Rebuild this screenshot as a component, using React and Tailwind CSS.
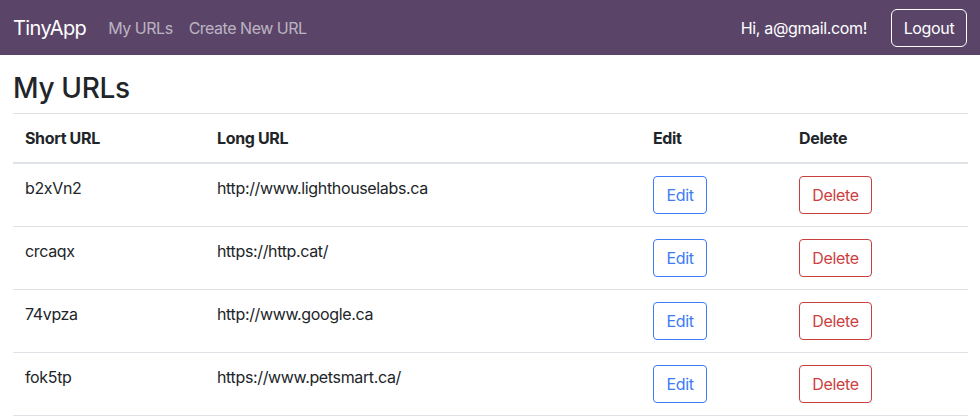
export default function App() {
  const rows = [
    ["b2xVn2", "http://www.lighthouselabs.ca"],
    ["crcaqx", "https://http.cat/"],
    ["74vpza", "http://www.google.ca"],
    ["fok5tp", "https://www.petsmart.ca/"],
  ];
  return (
    <div className="min-h-[420px] bg-white text-[#212529] text-base tracking-[-0.022em]" style={{ fontFamily: "Inter, 'Noto Sans', sans-serif" }}>
      <nav className="h-[55px] bg-[#5a4569] flex items-center px-[13px]">
        <span className="text-white text-[20px] tracking-[-0.03em] mr-[22px]">TinyApp</span>
        <span className="text-white/60 tracking-[-0.03em] mr-[16px]">My URLs</span>
        <span className="text-white/60 tracking-[-0.03em]">Create New URL</span>
        <div className="ml-auto flex items-center">
          <span className="text-white mr-[24px]">Hi, a@gmail.com!</span>
          <button className="h-[38px] w-[76px] border border-white rounded-[6px] text-white">Logout</button>
        </div>
      </nav>
      <main className="px-[13px] pt-[17px]">
        <h3 className="text-[28px] font-medium leading-[1.2] mb-[7px]">My URLs</h3>
        <table className="w-[955px] border-collapse text-left">
          <thead>
            <tr className="border-t border-[#dee2e6] border-b-2 border-b-[#dee2e6]">
              <th className="w-[192px] px-3 py-3 font-bold leading-6">Short URL</th>
              <th className="w-[436px] px-3 py-3 font-bold leading-6">Long URL</th>
              <th className="w-[146px] px-3 py-3 font-bold leading-6">Edit</th>
              <th className="px-3 py-3 font-bold leading-6">Delete</th>
            </tr>
          </thead>
          <tbody>
            {rows.map(([s, l]) => (
              <tr key={s} className="border-b border-[#dee2e6] align-top">
                <td className="px-3 pt-3 pb-[12px] leading-6">{s}</td>
                <td className="px-3 pt-3 pb-[12px] leading-6">{l}</td>
                <td className="px-3 pt-3 pb-[12px]">
                  <button className="h-[38px] w-[54px] border border-[#3b7cf6] text-[#3b7cf6] rounded-[4px]">Edit</button>
                </td>
                <td className="px-3 pt-3 pb-[12px]">
                  <button className="h-[38px] w-[73px] border border-[#cc3f3f] text-[#cc3f3f] rounded-[4px]">Delete</button>
                </td>
              </tr>
            ))}
          </tbody>
        </table>
      </main>
    </div>
  );
}
